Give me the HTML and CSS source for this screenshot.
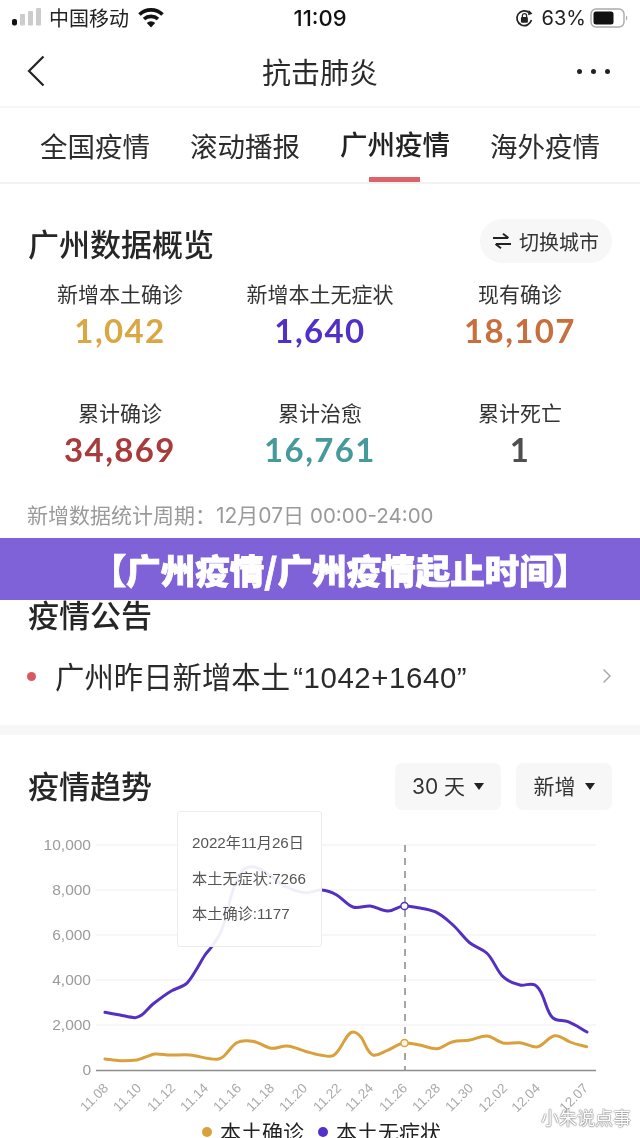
FILE: index.html
```html
<!DOCTYPE html>
<html lang="zh-CN">
<head>
<meta charset="utf-8">
<title>抗击肺炎</title>
<link rel="stylesheet" href="styles.css">
</head>
<body>
<div class="page">
  <div class="status">
    <div class="status-left">
      <svg class="signal" width="30" height="20" viewBox="0 0 30 20"><rect x="0" y="11" width="5" height="6.500" rx="2" fill="#111"/><rect x="8" y="6" width="5" height="11.500" rx="1" fill="#ccc"/><rect x="16" y="3" width="5" height="14.500" rx="1" fill="#ccc"/><rect x="24" y="0" width="5" height="17.500" rx="1" fill="#ccc"/></svg>
      <span class="carrier">中国移动</span>
      <svg class="wifi" width="26" height="20" viewBox="0 0 26 20"><path d="M1.500 6.500a16.500 16.500 0 0 1 23 0" fill="none" stroke="#111" stroke-width="3.600"/><path d="M6 11a10.500 10.500 0 0 1 14 0" fill="none" stroke="#111" stroke-width="3.600"/><path d="M13 19.500l-4.200-4.500a6 6 0 0 1 8.400 0z" fill="#111"/></svg>
    </div>
    <span class="time">11:09</span>
    <div class="status-right">
      <svg class="lock" width="19" height="19" viewBox="0 0 18 18"><path d="M15.600 10.500A7 7 0 1 1 13.600 3.600" fill="none" stroke="#222" stroke-width="1.600"/><path d="M13 1l3.600 3.600-4.200 1.400z" fill="#222"/><rect x="5.600" y="7.600" width="6.600" height="5.400" rx="1" fill="#222"/><path d="M7 8V6.400a2 2 0 0 1 4 0V8" fill="none" stroke="#222" stroke-width="1.200"/></svg>
      <span class="pct">63%</span>
      <svg class="battery" width="38" height="20" viewBox="0 0 38 20"><rect x="1" y="1" width="33" height="18" rx="5" fill="none" stroke="#aaa" stroke-width="1.400"/><rect x="3.500" y="3.500" width="20" height="13" rx="2.500" fill="#111"/><path d="M36 7.500a3 3 0 0 1 0 5z" fill="#aaa"/></svg>
    </div>
  </div>

  <header class="nav">
    <svg class="back" width="18" height="32" viewBox="0 0 18 32"><path d="M16.500 1.500L2 16l14.500 14.500" fill="none" stroke="#222" stroke-width="2.200"/></svg>
    <h1 class="nav-title">抗击肺炎</h1>
    <div class="more"><i></i><i></i><i></i></div>
  </header>

  <nav class="tabs">
    <span class="tab">全国疫情</span>
    <span class="tab">滚动播报</span>
    <span class="tab tab-active">广州疫情</span>
    <span class="tab">海外疫情</span>
  </nav>

  <section class="card overview">
    <div class="card-head">
      <h2 class="card-title">广州数据概览</h2>
      <div class="switch">
        <svg width="18" height="16" viewBox="0 0 18 16"><path d="M0 5h15M10 .8L15.500 5" fill="none" stroke="#222" stroke-width="2"/><path d="M18 11H3M8 15.200L2.500 11" fill="none" stroke="#222" stroke-width="2"/></svg>
        <span>切换城市</span>
      </div>
    </div>
    <div class="stats">
      <div class="stat"><div class="stat-label">新增本土确诊</div><div class="stat-num c-gold">1,042</div></div>
      <div class="stat"><div class="stat-label">新增本土无症状</div><div class="stat-num c-purple">1,640</div></div>
      <div class="stat"><div class="stat-label">现有确诊</div><div class="stat-num c-orange">18,107</div></div>
      <div class="stat"><div class="stat-label">累计确诊</div><div class="stat-num c-red">34,869</div></div>
      <div class="stat"><div class="stat-label">累计治愈</div><div class="stat-num c-teal">16,761</div></div>
      <div class="stat"><div class="stat-label">累计死亡</div><div class="stat-num c-gray">1</div></div>
    </div>
    <p class="period">新增数据统计周期：12月07日 <span class="period-time">00:00-24:00</span></p>
  </section>

  <section class="card notice">
    <h2 class="card-title">疫情公告</h2>
    <div class="notice-row">
      <i class="dot"></i>
      <span class="notice-text">广州昨日新增本土<span class="notice-count">“1042+1640”</span></span>
      <svg class="chev" width="10" height="16" viewBox="0 0 10 16"><path d="M1.500 1.500L8 8l-6.500 6.500" fill="none" stroke="#aaa" stroke-width="1.500"/></svg>
    </div>
  </section>

  <section class="card trend">
    <div class="card-head">
      <h2 class="card-title">疫情趋势</h2>
      <div class="filters">
        <div class="filter filter-days"><span>30 天</span><i class="caret"></i></div>
        <div class="filter filter-kind"><span>新增</span><i class="caret"></i></div>
      </div>
    </div>
    <div class="chart">
      <svg class="plot" width="640" height="328" viewBox="0 810 640 328">
        <g class="grid">
          <line x1="96" x2="596" y1="845" y2="845"/>
          <line x1="96" x2="596" y1="890" y2="890"/>
          <line x1="96" x2="596" y1="935" y2="935"/>
          <line x1="96" x2="596" y1="980" y2="980"/>
          <line x1="96" x2="596" y1="1025" y2="1025"/>
        </g>
        <line class="axis" x1="96" x2="596" y1="1070.500" y2="1070.500"/>
        <g class="ylabels">
          <text x="91" y="850">10,000</text>
          <text x="91" y="895">8,000</text>
          <text x="91" y="940">6,000</text>
          <text x="91" y="985">4,000</text>
          <text x="91" y="1030">2,000</text>
          <text x="91" y="1075">0</text>
        </g>
        <g class="xlabels">
          <text transform="translate(109 1089) rotate(-45)">11.08</text>
          <text transform="translate(142 1089) rotate(-45)">11.10</text>
          <text transform="translate(176 1089) rotate(-45)">11.12</text>
          <text transform="translate(209 1089) rotate(-45)">11.14</text>
          <text transform="translate(242 1089) rotate(-45)">11.16</text>
          <text transform="translate(275 1089) rotate(-45)">11.18</text>
          <text transform="translate(308 1089) rotate(-45)">11.20</text>
          <text transform="translate(342 1089) rotate(-45)">11.22</text>
          <text transform="translate(374 1089) rotate(-45)">11.24</text>
          <text transform="translate(408 1089) rotate(-45)">11.26</text>
          <text transform="translate(441 1089) rotate(-45)">11.28</text>
          <text transform="translate(474 1089) rotate(-45)">11.30</text>
          <text transform="translate(508 1089) rotate(-45)">12.02</text>
          <text transform="translate(541 1089) rotate(-45)">12.04</text>
          <text transform="translate(589 1089) rotate(-45)">12.07</text>
        </g>
        <line class="cursor" x1="405" x2="405" y1="845" y2="1070"/>
        <path class="line line-purple" d="M105 1012.300C110 1013.200 115 1014.100 120 1015C125 1015.900 130 1017.300 135 1017.700C137.500 1017.800 139 1016.800 141.700 1015C146 1012 149 1007.200 153 1004C159 999.300 165.500 994.300 171.700 990.700C177 987.700 182.500 987.300 186.700 983.300C190 980.200 192.500 975.800 195 971.700C198.500 966.200 201.500 960.300 205 955C207.500 951.500 210.500 949 213 945C217.500 938.300 220 935 223 926.700C227 915.500 229 901.500 233 890C236 881.500 239 875 243 870C246 867 249.500 866.500 253 866.700C258 867 262 870 266.700 873C272.500 876.800 277 881.500 283 885C290 888.800 298 892.800 307 892.700C312 892.700 316 889.700 321.700 890C327 890.300 332 892.300 336.700 895C342.500 898.500 347 904.800 353 907C358.500 908.800 364 905.700 370 906C376 906.300 381.500 911.300 388 911C394 910.700 398 906 404.300 906C409.500 906 415 907.300 420 908C425 908.800 430 909.500 435 911.700C441.500 914.500 447 919.700 453 925C459 930.500 464 938 470 943C475.500 947.300 481.500 948.300 486.700 953C493.500 959.300 496.500 970.500 503 976.700C508 981.500 514 983.700 520 985C525 986 530.500 982.500 535 985C539 987.500 541 991.500 543 996.700C546 1004 548 1014 553 1018C557 1021.500 563 1019.800 568 1021.700C575 1024.500 581 1028.700 587 1032"/>
        <path class="line line-gold" d="M105 1059C110 1059.600 115 1060.500 120 1060.700C126 1060.900 131 1060.800 136.700 1060C143 1059 149 1054.800 155 1054C160 1053.500 165 1055 170 1055C177 1055.200 183.500 1054.500 190 1055C199 1055.800 208 1059.600 216.700 1059.300C220 1059.200 222 1058 225 1055C229 1051 232 1045.500 236.700 1042.700C240 1040.900 243.300 1040.600 246.700 1040.700C250 1040.800 253.500 1041 256.700 1042.300C262 1044.200 266.500 1047.800 271.700 1048.300C276.500 1048.800 281.700 1045.700 286.700 1046C293.500 1046.400 300 1049.700 306.700 1051.700C311 1053 315.500 1054.500 320 1055C324.500 1055.500 329.700 1057.300 333 1055.700C337.500 1053 339.500 1049 343 1043C346 1038 349 1032 353 1032C356.500 1032 359 1034.500 361.700 1038C365 1043 367.500 1053.500 373 1055C377.500 1056.200 382 1052.500 386.700 1050.700C392.500 1048.500 398 1043.500 404 1043C409 1042.600 415 1044 420 1045C426 1046.200 431 1049 436.700 1048.700C442.500 1048.300 447 1043 453 1041.700C458.500 1040.500 464.500 1041.200 470 1040C475.500 1039 481 1035.800 486.700 1036C493 1036.300 497 1041.600 503 1043C508.500 1044 514.500 1042.200 520 1042.700C526 1043.200 531 1047.200 536.700 1047C543.500 1046.700 548 1036.300 555 1035.700C560.500 1035.200 565 1039.800 570 1042C575.500 1044.300 581 1045.200 586.700 1046.700"/>
        <circle class="mark mark-purple" cx="404.500" cy="906" r="3.600"/>
        <circle class="mark mark-gold" cx="404.500" cy="1043" r="3.600"/>
        <g class="legend">
          <circle cx="207" cy="1132" r="5" fill="#d9a03c"/>
          <text x="220" y="1140">本土确诊</text>
          <circle cx="323" cy="1132" r="5" fill="#5530c8"/>
          <text x="336" y="1140">本土无症状</text>
        </g>
      </svg>
      <div class="tooltip">
        <div>2022年11月26日</div>
        <div>本土无症状:7266</div>
        <div>本土确诊:1177</div>
      </div>
    </div>
  </section>

  <div class="banner"><span>【广州疫情/广州疫情起止时间】</span></div>
  <div class="watermark">小朱说点事</div>
</div>
</body>
</html>
```
FILE: styles.css
```css
* { box-sizing: border-box; margin: 0; padding: 0; }
html, body { background: #fff; }
body {
  font-family: "Noto Sans CJK SC", "Liberation Sans", sans-serif;
  color: #222;
  overflow: hidden;
}
.page {
  position: relative;
  width: 640px;
  height: 1138px;
  overflow: hidden;
  background: #fff;
  filter: blur(0.35px);
}
i { display: block; }

.status {
  height: 36px;
  position: relative;
  display: flex;
  align-items: center;
  justify-content: space-between;
  padding: 0 12px;
}
.status-left, .status-right { display: flex; align-items: center; }
.carrier { font-size: 20px; margin-left: 7px; color: #222; line-height: 36px; }
.wifi { margin-left: 9px; }
.time {
  position: absolute;
  left: 0; right: 0;
  text-align: center;
  font: 500 22px/36px Inter, "Liberation Sans", sans-serif;
  color: #111;
}
.pct { font: 400 20px/36px Inter, "Liberation Sans", sans-serif; margin-left: 8px; color: #222; }
.battery { margin-left: 4px; }

.nav {
  height: 72px;
  display: flex;
  align-items: center;
  justify-content: space-between;
  padding: 0 30px 0 27px;
  border-bottom: 2px solid #f6f6f6;
}
.nav-title {
  font-size: 29px;
  font-weight: 400;
  line-height: 40px;
  color: #2a2a2a;
  position: absolute;
  left: 0; right: 0;
  text-align: center;
}
.more { display: flex; gap: 9px; }
.more i { width: 5px; height: 5px; border-radius: 50%; background: #222; }

.tabs {
  height: 76px;
  display: grid;
  grid-template-columns: repeat(4, 150px);
  justify-content: center;
  border-bottom: 2px solid #f2f2f2;
}
.tab {
  font-size: 27.500px;
  line-height: 74px;
  text-align: center;
  color: #2c2c2c;
  position: relative;
}
.tab-active { font-weight: 500; line-height: 71px; color: #222; }
.tab-active::after {
  content: "";
  position: absolute;
  left: 50%;
  bottom: 0;
  width: 51px;
  height: 5px;
  margin-left: -26px;
  background: #dc6468;
}

.card { padding-left: 28px; padding-right: 28px; }
.card-head { display: flex; align-items: center; justify-content: space-between; }
.card-title { font-size: 31px; font-weight: 500; line-height: 40px; color: #262626; }

.overview { padding-top: 33px; height: 376px; border-bottom: 10px solid #f7f7f7; }
.overview .card-title { padding-top: 6px; }
.overview .switch { align-self: flex-start; margin-top: 2px; }
.switch {
  height: 44px;
  width: 132px;
  border-radius: 22px;
  background: #f7f7f7;
  display: flex;
  align-items: center;
  justify-content: center;
  gap: 8px;
  font-size: 20px;
  color: #333;
}
.stats {
  margin: 15px -28px 0;
  padding: 0 20px;
  display: grid;
  grid-template-columns: repeat(3, 1fr);
  row-gap: 45px;
}
.stat { text-align: center; height: 74px; }
.stat-label { font-size: 21px; line-height: 30px; color: #333; }
.stat-num {
  font: 700 33px/44px Lato, "Liberation Sans", sans-serif;
  letter-spacing: 1.400px;
}
.c-gold { color: #d9a744; }
.c-purple { color: #5230c6; }
.c-orange { color: #c76f3d; }
.c-red { color: #a83b3b; }
.c-teal { color: #479a9b; }
.c-gray { color: #4f4f4f; }
.period { margin: 29px 0 0 -1px; font: 400 21px/32px Inter, "Noto Sans CJK SC", sans-serif; color: #9a9a9a; }
.period-time { font-size: 20.500px; }

.notice { padding-top: 34px; height: 165px; }
.notice-row { display: flex; align-items: center; height: 40px; margin-top: 22px; }
.dot { width: 9px; height: 9px; border-radius: 50%; background: #d9595f; flex: none; margin-left: -1px; }
.notice-text { font-size: 29.400px; line-height: 40px; margin-left: 19px; flex: 1; color: #2a2a2a; }
.notice-count { font-family: "Liberation Sans", sans-serif; letter-spacing: 0.600px; padding: 0 3px; }

.trend { border-top: 10px solid #f7f7f7; padding-top: 28px; }
.trend .card-title { padding-bottom: 3px; }
.filters { display: flex; gap: 15px; }
.filter {
  height: 47px;
  border-radius: 7px;
  background: #f7f7f7;
  display: flex;
  align-items: center;
  justify-content: center;
  gap: 9px;
  font: 400 21px/47px Inter, "Noto Sans CJK SC", sans-serif;
  color: #333;
}
.filter-days { width: 106px; }
.filter-kind { width: 96px; }
.caret {
  width: 0; height: 0;
  border-left: 5.500px solid transparent;
  border-right: 5.500px solid transparent;
  border-top: 7px solid #222;
}

.chart { position: relative; height: 328px; margin: 0 -28px; }
.plot { display: block; }
.grid line { stroke: #f4f4f6; stroke-width: 1.500; }
.axis { stroke: #8c8c8c; stroke-width: 1.500; }
.ylabels text { font: 15.500px "Liberation Sans", sans-serif; fill: #9b9b9b; text-anchor: end; }
.xlabels text { font: 13.500px "Liberation Sans", sans-serif; fill: #aaa; text-anchor: end; }
.cursor { stroke: #888; stroke-width: 1.500; stroke-dasharray: 7 6; }
.line { fill: none; stroke-width: 3; stroke-linecap: round; stroke-linejoin: round; }
.line-purple { stroke: #5530c0; }
.line-gold { stroke: #d9a03c; }
.mark { fill: #fff; stroke-width: 1.500; }
.mark-purple { stroke: #5530c0; }
.mark-gold { fill: #fdf6e3; stroke: #d9a03c; }
.legend text { font: 400 21px "Noto Sans CJK SC", sans-serif; fill: #222; }

.tooltip {
  position: absolute;
  left: 177px;
  top: 1px;
  width: 145px;
  height: 136px;
  padding: 13px 14px 0;
  background: rgba(255, 255, 255, 0.92);
  border: 1.500px solid #ececec;
  border-radius: 3px;
  font: 15.200px/35.500px "Liberation Sans", "Noto Sans CJK SC", sans-serif;
  color: #555;
}

.banner {
  position: absolute;
  left: 0;
  top: 538px;
  width: 640px;
  height: 62px;
  background: #7f62d8;
  display: flex;
  align-items: center;
  justify-content: center;
  padding-left: 40px;
  font-size: 34.500px;
  font-weight: 900;
  color: #fff;
  -webkit-text-stroke: 0.800px #fff;
  white-space: nowrap;
}
.watermark {
  position: absolute;
  left: 541px;
  top: 1105px;
  font-size: 18px;
  line-height: 24px;
  color: #fff;
  text-shadow: 0 0 1px #777, 0 0 1px #777, 0 0 2px #888;
}
```
